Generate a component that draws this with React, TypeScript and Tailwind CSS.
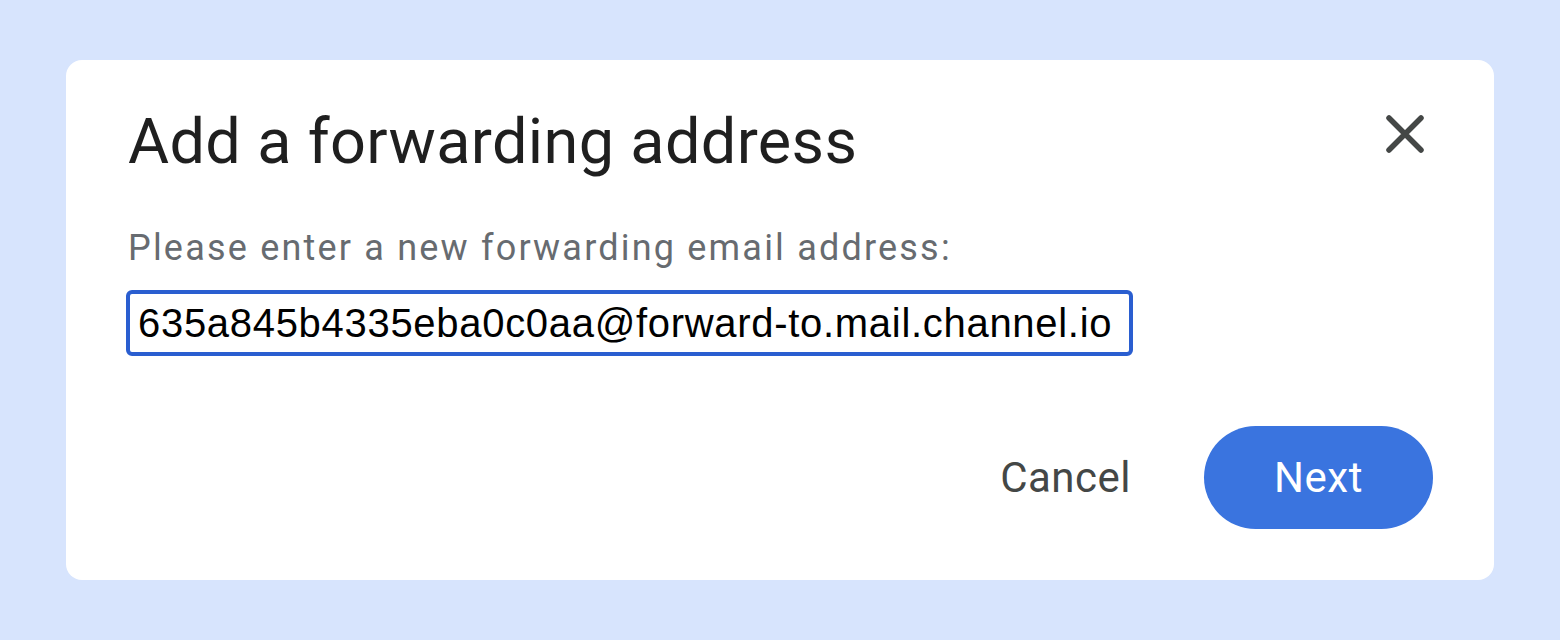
import React from 'react';

const App: React.FC = () => {
  return (
    <div className="w-full h-[640px] bg-[#d7e4fd] pt-[60px] pl-[66px]">
      <div
        className="w-[1428px] h-[520px] bg-white rounded-[16px] flex flex-col pt-[50px] pl-[62px] pr-[61px]"
        style={{ fontFamily: 'Roboto, "Liberation Sans", sans-serif' }}
      >
        {/* Header */}
        <div className="flex items-start justify-between">
          <h1 className="text-[63px] leading-[1] tracking-[0.35px] text-[#1f1f1f]">Add a forwarding address</h1>
          <button className="w-[40px] h-[40px] mt-[4px] mr-[8px] flex items-center justify-center text-[#444746]">
            <svg width="40" height="40" viewBox="0 0 40 40" fill="none" stroke="currentColor" strokeWidth="5.5" strokeLinecap="round">
              <path d="M4 4 L36 36 M36 4 L4 36" />
            </svg>
          </button>
        </div>

        {/* Body */}
        <p className="mt-[57px] text-[36px] leading-[1] tracking-[2.2px] text-[#676b70]">
          Please enter a new forwarding email address:
        </p>
        <div className="mt-[24px] -ml-[2px] w-[1007px] h-[66px] border-[4px] border-[#2a5ed0] rounded-[6px] flex items-center pl-[8px]">
          <span
            className="text-[40px] tracking-[0.7px] text-black leading-[1]"
            style={{ fontFamily: '"Liberation Sans", Arial, sans-serif' }}
          >
            635a845b4335eba0c0aa@forward-to.mail.channel.io
          </span>
        </div>

        {/* Actions */}
        <div className="mt-[70px] flex items-center justify-end gap-[73px]">
          <button className="text-[42px] tracking-[0.5px] text-[#444746] leading-[1]">Cancel</button>
          <button className="w-[229px] h-[103px] rounded-full bg-[#3a74df] text-white text-[42px] tracking-[0.6px] leading-[1]">
            Next
          </button>
        </div>
      </div>
    </div>
  );
};

export default App;
